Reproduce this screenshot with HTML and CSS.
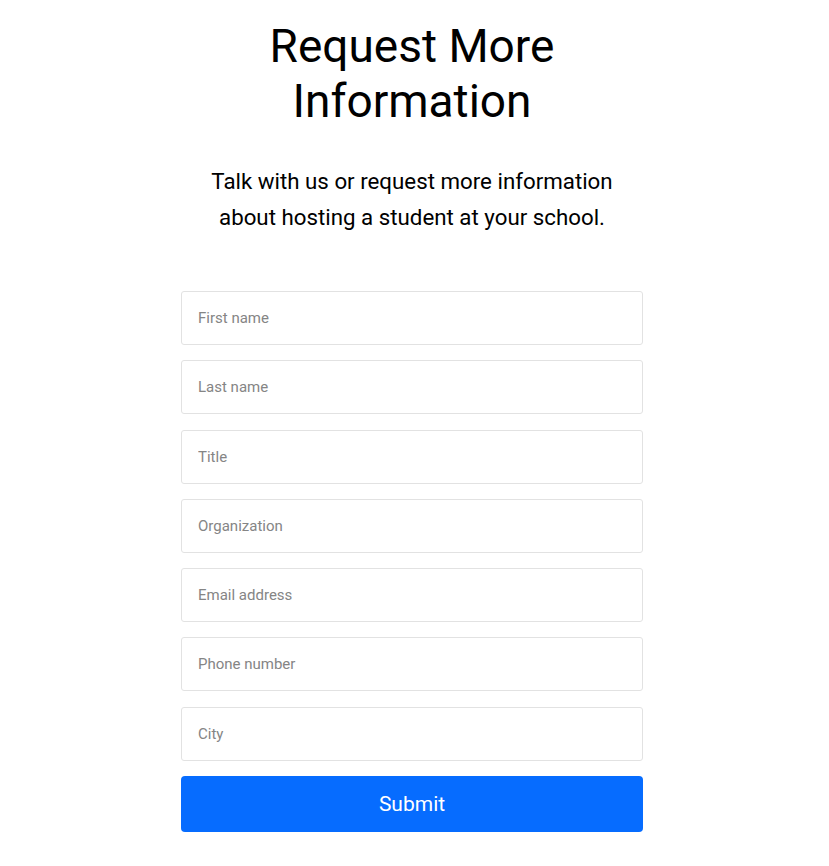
FILE: index.html
```html
<!DOCTYPE html>
<html lang="en">
<head>
<meta charset="UTF-8">
<title>Request More Information</title>
<link rel="stylesheet" href="styles.css">
</head>
<body>
<div class="page">
  <h1 class="title">Request More<br>Information</h1>
  <p class="lead">Talk with us or request more information<br>about hosting a student at your school.</p>
  <form class="form">
    <input class="field" type="text" placeholder="First name">
    <input class="field" type="text" placeholder="Last name">
    <input class="field" type="text" placeholder="Title">
    <input class="field" type="text" placeholder="Organization">
    <input class="field" type="email" placeholder="Email address">
    <input class="field" type="tel" placeholder="Phone number">
    <input class="field" type="text" placeholder="City">
    <button class="submit" type="submit">Submit</button>
  </form>
</div>
</body>
</html>
```

FILE: styles.css
```css
*, *:before, *:after{
  box-sizing: border-box;
}
body{
  margin: 0;
  background: #fff;
  color: #000;
  font-family: Roboto, "Liberation Sans", sans-serif;
}
.page{
  padding: 19px 5px 0 0;
  display: flex;
  flex-direction: column;
  align-items: center;
}
.title{
  margin: 0;
  font-size: 46px;
  font-weight: 400;
  line-height: 55px;
  text-align: center;
}
.lead{
  margin: 34px 0 0;
  font-size: 22.3px;
  line-height: 36px;
  text-align: center;
}
.form{
  width: 462px;
  margin-top: 56px;
  display: flex;
  flex-direction: column;
  gap: 15.3px;
}
.field{
  height: 54px;
  padding: 0 16px;
  border: 1px solid #e2e2e2;
  border-radius: 3px;
  font-family: inherit;
  font-size: 15px;
  color: #333;
  outline: none;
}
.field::placeholder{
  color: #858585;
}
.submit{
  height: 56px;
  border: 0;
  border-radius: 4px;
  background: #066cff;
  color: #fff;
  font-family: inherit;
  font-size: 21px;
  font-weight: 400;
  cursor: pointer;
}
```
